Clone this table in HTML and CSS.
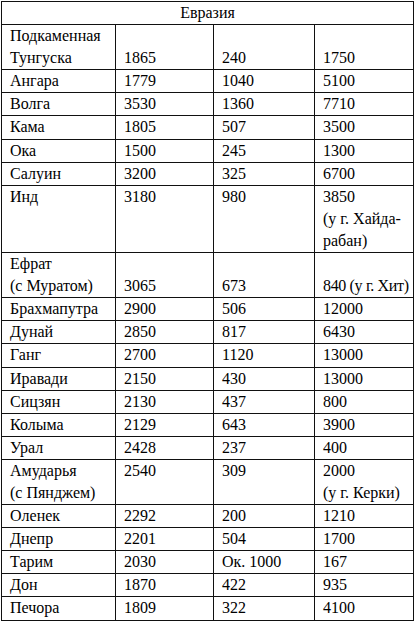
FILE: index.html
```html
<!DOCTYPE html>
<html lang="ru">
<head>
<meta charset="utf-8">
<title>Евразия</title>
<link rel="stylesheet" href="styles.css">
</head>
<body>
<table class="rivers">
<colgroup>
<col class="c1"><col class="c2"><col class="c3"><col class="c4">
</colgroup>
<thead>
<tr><th colspan="4" class="head">Евразия</th></tr>
</thead>
<tbody>
<tr><td>Подкаменная<br>Тунгуска</td><td class="bot">1865</td><td class="bot">240</td><td class="bot">1750</td></tr>
<tr><td>Ангара</td><td>1779</td><td>1040</td><td>5100</td></tr>
<tr><td>Волга</td><td>3530</td><td>1360</td><td>7710</td></tr>
<tr><td>Кама</td><td>1805</td><td>507</td><td>3500</td></tr>
<tr><td>Ока</td><td>1500</td><td>245</td><td>1300</td></tr>
<tr><td>Салуин</td><td>3200</td><td>325</td><td>6700</td></tr>
<tr><td>Инд</td><td>3180</td><td>980</td><td>3850<br>(у г. Хайда-<br>рабан)</td></tr>
<tr><td>Ефрат<br>(с Муратом)</td><td class="bot">3065</td><td class="bot">673</td><td class="bot tight">840 (у г. Хит)</td></tr>
<tr><td>Брахмапутра</td><td>2900</td><td>506</td><td>12000</td></tr>
<tr><td>Дунай</td><td>2850</td><td>817</td><td>6430</td></tr>
<tr><td>Ганг</td><td>2700</td><td>1120</td><td>13000</td></tr>
<tr><td>Иравади</td><td>2150</td><td>430</td><td>13000</td></tr>
<tr><td>Сицзян</td><td>2130</td><td>437</td><td>800</td></tr>
<tr><td>Колыма</td><td>2129</td><td>643</td><td>3900</td></tr>
<tr><td>Урал</td><td>2428</td><td>237</td><td>400</td></tr>
<tr><td>Амударья<br>(с Пянджем)</td><td>2540</td><td>309</td><td>2000<br>(у г. Керки)</td></tr>
<tr><td>Оленек</td><td>2292</td><td>200</td><td>1210</td></tr>
<tr><td>Днепр</td><td>2201</td><td>504</td><td>1700</td></tr>
<tr><td>Тарим</td><td>2030</td><td>Ок. 1000</td><td>167</td></tr>
<tr><td>Дон</td><td>1870</td><td>422</td><td>935</td></tr>
<tr><td>Печора</td><td>1809</td><td>322</td><td>4100</td></tr>
</tbody>
</table>
</body>
</html>
```

FILE: styles.css
```css
html, body {
  margin: 0;
  padding: 0;
  background: #fff;
}

body {
  padding: 1px 0 0 1px;
  font-family: "Liberation Serif", "Times New Roman", serif;
  font-size: 16px;
  color: #000;
}

.rivers {
  table-layout: fixed;
  width: 413px;
  border-collapse: separate;
  border-spacing: 0;
  border-top: 1px solid #111;
  border-left: 1px solid #111;
}

.c1 { width: 114px; }
.c2 { width: 98px; }
.c3 { width: 101px; }
.c4 { width: 99px; }

.rivers th,
.rivers td {
  box-sizing: border-box;
  padding: 0 0 0 8px;
  line-height: 22.1px;
  border-right: 1px solid #111;
  border-bottom: 1px solid #111;
  vertical-align: top;
  text-align: left;
  font-weight: normal;
  white-space: nowrap;
  overflow: hidden;
}

.rivers th.head {
  text-align: center;
  padding: 0;
}

.rivers td.bot {
  vertical-align: bottom;
}

.rivers td.tight {
  letter-spacing: -0.35px;
}
```
